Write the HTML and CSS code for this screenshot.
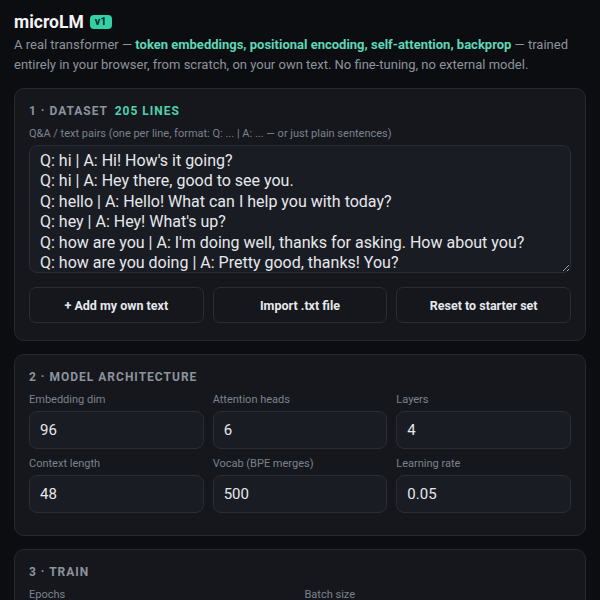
FILE: index.html
```html
<!DOCTYPE html>
<html lang="en">
<head>
<meta charset="utf-8">
<link rel="stylesheet" href="styles.css">
</head>
<body>
<div class="page">
  <header class="header">
    <h1 class="title">microLM <span class="badge">v1</span></h1>
    <p class="sub">A real transformer — <b class="hl">token embeddings, positional encoding, self-attention, backprop</b> — trained entirely in your browser, from scratch, on your own text. No fine-tuning, no external model.</p>
  </header>

  <section class="card">
    <h2 class="sec">1 · Dataset <span class="count">205 lines</span></h2>
    <div class="hint">Q&amp;A / text pairs (one per line, format: Q: ... | A: ... — or just plain sentences)</div>
    <textarea class="data" spellcheck="false">Q: hi | A: Hi! How's it going?
Q: hi | A: Hey there, good to see you.
Q: hello | A: Hello! What can I help you with today?
Q: hey | A: Hey! What's up?
Q: how are you | A: I'm doing well, thanks for asking. How about you?
Q: how are you doing | A: Pretty good, thanks! You?
Q: how are ya | A: Glad to be on it. What's new on yours?</textarea>
    <div class="btns">
      <button class="btn">+ Add my own text</button>
      <button class="btn">Import .txt file</button>
      <button class="btn">Reset to starter set</button>
    </div>
  </section>

  <section class="card">
    <h2 class="sec">2 · Model architecture</h2>
    <div class="grid3">
      <label class="field"><span class="lbl">Embedding dim</span><input class="inp" value="96"></label>
      <label class="field"><span class="lbl">Attention heads</span><input class="inp" value="6"></label>
      <label class="field"><span class="lbl">Layers</span><input class="inp" value="4"></label>
      <label class="field"><span class="lbl">Context length</span><input class="inp" value="48"></label>
      <label class="field"><span class="lbl">Vocab (BPE merges)</span><input class="inp" value="500"></label>
      <label class="field"><span class="lbl">Learning rate</span><input class="inp" value="0.05"></label>
    </div>
  </section>

  <section class="card">
    <h2 class="sec">3 · Train</h2>
    <div class="grid2">
      <label class="field"><span class="lbl">Epochs</span><input class="inp" value="30"></label>
      <label class="field"><span class="lbl">Batch size</span><input class="inp" value="16"></label>
    </div>
  </section>
</div>
</body>
</html>
```
FILE: styles.css
```css
* { box-sizing: border-box; }
html, body { margin: 0; padding: 0; background: #0c0d11; }
body {
  font-family: Roboto, "Liberation Sans", sans-serif;
  color: #e6e8ec;
  overflow: hidden;
}
.page { padding: 10px 14px 40px; }
.header { margin-bottom: 13px; }
.title {
  margin: 0;
  font-size: 17.5px;
  font-weight: 700;
  color: #f3f4f6;
  display: flex;
  align-items: center;
  gap: 6px;
  line-height: 24px;
}
.badge {
  background: #34d0a5;
  color: #0b2a22;
  font-size: 11px;
  font-weight: 700;
  padding: 0 5px;
  border-radius: 4px;
  line-height: 14px;
}
.sub {
  margin: 1px 0 0;
  font-size: 13px;
  line-height: 20px;
  color: #8d939c;
}
.hl { color: #5fd7b8; font-weight: 700; }
.card {
  background: #15171d;
  border: 1px solid #262930;
  border-radius: 10px;
  padding: 14px 14px 17px;
  margin-bottom: 13px;
}
.sec {
  margin: 0 0 8px;
  font-size: 12px;
  font-weight: 700;
  letter-spacing: 1px;
  text-transform: uppercase;
  color: #8d939c;
  line-height: 16px;
}
.count { color: #4fd1ae; margin-left: 3px; }
.hint { font-size: 11px; color: #7c828c; margin-bottom: 4px; line-height: 14px; }
.data {
  display: block;
  width: 100%;
  height: 128px;
  background: #1a1c23;
  border: 1px solid #2a2d35;
  border-radius: 8px;
  color: #e6e8ec;
  font-family: inherit;
  font-size: 16px;
  line-height: 20.4px;
  padding: 5px 10px;
  resize: vertical;
  overflow: hidden;
  margin: 0;
}
.btns { display: grid; grid-template-columns: 1fr 1fr 1fr; gap: 9px; margin-top: 14px; }
.btn {
  height: 36px;
  background: #15171d;
  border: 1px solid #2a2d35;
  border-radius: 7px;
  color: #e6e8ec;
  font-family: inherit;
  font-size: 12.5px;
  font-weight: 700;
}
.grid3 { display: grid; grid-template-columns: 1fr 1fr 1fr; gap: 8px 9px; margin-bottom: 5px; }
.grid2 { display: grid; grid-template-columns: 1fr 1fr; gap: 8px 9px; }
.field { display: flex; flex-direction: column; gap: 4px; }
.lbl { font-size: 11px; color: #7c828c; line-height: 14px; }
.inp {
  height: 38px;
  background: #1a1c23;
  border: 1px solid #2a2d35;
  border-radius: 8px;
  color: #e6e8ec;
  font-family: inherit;
  font-size: 15px;
  padding: 0 10px;
  width: 100%;
  outline: none;
}
```
